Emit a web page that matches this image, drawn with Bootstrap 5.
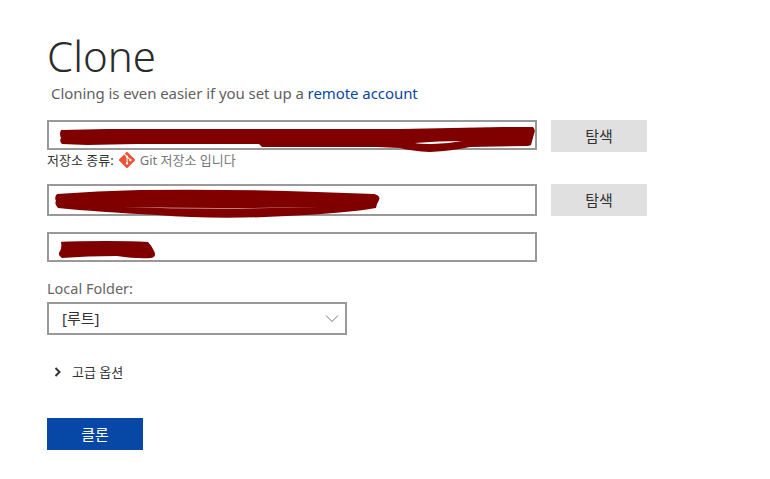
<!DOCTYPE html>
<html lang="ko">
<head>
  <meta charset="UTF-8">
  <meta name="viewport" content="width=device-width, initial-scale=1.0">
  <title>Clone</title>
  <link href="https://cdn.jsdelivr.net/npm/bootstrap@5.3.1/dist/css/bootstrap.min.css" rel="stylesheet">
  <style>
    body {
      font-family: "Noto Sans", "Noto Sans CJK KR", sans-serif;
      background-color: #fff;
      color: #333;
    }
    .clone-page {
      padding: 32px 0 0 47px;
    }
    .clone-title {
      font-size: 42px;
      font-weight: 300;
      line-height: 48px;
      color: #2b2b2b;
      margin: 0;
    }
    .clone-hint {
      font-size: 15px;
      line-height: 20px;
      letter-spacing: -0.07px;
      color: #5f5f5f;
      margin: 3px 0 17px 4px;
    }
    .clone-hint a {
      color: #0b47a1;
      text-decoration: none;
    }
    .field-row {
      gap: 14px;
    }
    .field-wrap {
      width: 490px;
    }
    .field-wrap .form-control,
    .folder-select {
      border: 2px solid #999;
      border-radius: 0;
      box-shadow: none;
    }
    .field-h30 .form-control {
      height: 30px;
    }
    .field-h32 .form-control {
      height: 32px;
    }
    .scribble {
      position: absolute;
      left: 0;
      top: 0;
      overflow: visible;
      pointer-events: none;
    }
    .browse-btn {
      width: 96px;
      height: 32px;
      padding: 0;
      border: 0;
      border-radius: 0;
      background-color: #e0e0e0;
      color: #333;
      font-size: 15px;
    }
    .repo-type {
      font-size: 13px;
      line-height: 16px;
      color: #333;
      height: 32px;
      gap: 5px;
    }
    .repo-type-note {
      color: #777;
    }
    .folder-label {
      font-size: 14.5px;
      line-height: 20px;
      color: #666;
      margin: 16px 0 4px;
    }
    .folder-select {
      width: 300px;
      height: 33px;
      padding: 0 30px 0 13px;
      font-size: 15px;
      color: #333;
      background-size: 14px 11px;
      background-position: right 6px center;
      background-image: url("data:image/svg+xml,%3csvg xmlns='http://www.w3.org/2000/svg' viewBox='0 0 14 8'%3e%3cpath fill='none' stroke='%23777' stroke-width='1' d='M1 1l6 6 6-6'/%3e%3c/svg%3e");
    }
    .advanced-toggle {
      font-size: 13px;
      line-height: 16px;
      color: #333;
      margin-top: 29px;
      padding-left: 7px;
      gap: 11px;
    }
    .clone-btn {
      width: 96px;
      height: 32px;
      padding: 0;
      margin-top: 38px;
      border: 0;
      border-radius: 0;
      background-color: #0747a6;
      color: #fff;
      font-size: 15px;
    }
  </style>
</head>
<body>
  <div class="clone-page">
    <h1 class="clone-title">Clone</h1>
    <p class="clone-hint">Cloning is even easier if you set up a <a href="#">remote account</a></p>

    <!-- Source -->
    <div class="d-flex align-items-start field-row">
      <div class="field-wrap field-h30 position-relative">
        <input type="text" class="form-control">
        <svg class="scribble" width="490" height="30" aria-hidden="true">
          <path fill="#800000" d="M14 10 L60 9 L132 9 L215 9 L353 9 L456 7 L486 7 Q489 10 487 14 L484 25 L481 26 L423 27 Q405 31 383 32 Q365 31 353 28 L330 27 L215 27 L212 24 L130 24 L90 24 L40 25 L15 24 Q12 21 14 18 Q12 14 14 10 Z"/>
          <path fill="#fff" d="M368 23 Q392 21 415 21 Q400 24 385 24 Q372 24 368 23 Z"/>
        </svg>
      </div>
      <button type="button" class="btn browse-btn">탐색</button>
    </div>
    <div class="d-flex align-items-start repo-type">
      <span>저장소 종류:</span>
      <svg width="16" height="16" viewBox="0 0 24 24" aria-hidden="true">
        <path fill="#f05033" d="M23.546 10.93L13.067.452c-.604-.603-1.582-.603-2.188 0L8.708 2.627l2.76 2.76c.645-.215 1.379-.07 1.889.441.516.515.658 1.258.438 1.9l2.658 2.66c.645-.223 1.387-.078 1.9.435.721.72.721 1.884 0 2.604-.719.719-1.881.719-2.6 0-.539-.541-.674-1.337-.404-1.996L12.86 8.955v6.525c.176.086.342.203.488.348.713.721.713 1.883 0 2.6-.719.721-1.889.721-2.609 0-.719-.719-.719-1.879 0-2.598.182-.18.387-.316.605-.406V8.835c-.217-.091-.424-.222-.6-.401-.545-.545-.676-1.342-.396-2.009L7.636 3.7.45 10.881c-.6.605-.6 1.584 0 2.189l10.48 10.477c.604.604 1.582.604 2.186 0l10.43-10.43c.605-.603.605-1.582 0-2.187"/>
      </svg>
      <span class="repo-type-note">Git 저장소 입니다</span>
    </div>

    <!-- Destination -->
    <div class="d-flex align-items-start field-row">
      <div class="field-wrap field-h32 position-relative">
        <input type="text" class="form-control">
        <svg class="scribble" width="490" height="32" aria-hidden="true">
          <path fill="#800000" d="M10 10 Q50 7 93 6 Q190 5 270 8 L327 10 Q334 12 332 16 Q330 19 329 24 Q300 29 240 32 Q170 36 110 31 Q50 28 11 24 Q7 20 9 17 Q7 13 10 10 Z"/>
          <path fill="#fff" d="M76 23 Q170 25 273 23 Q170 26 76 23 Z"/>
        </svg>
      </div>
      <button type="button" class="btn browse-btn">탐색</button>
    </div>

    <div class="field-wrap field-h30 position-relative mt-3">
      <input type="text" class="form-control">
      <svg class="scribble" width="490" height="30" aria-hidden="true">
        <path fill="#800000" d="M14 10 Q16 9 60 9 Q85 9 101 10 Q105 14 107 19 Q110 25 104 26 Q90 27 70 24 Q40 24 15 26 Q10 23 13 19 Q15 16 14 10 Z"/>
      </svg>
    </div>

    <!-- Local folder -->
    <div class="folder-label">Local Folder:</div>
    <select class="form-select folder-select">
      <option>[루트]</option>
    </select>

    <div class="d-flex align-items-center advanced-toggle">
      <svg width="7" height="10" viewBox="0 0 7 10" aria-hidden="true">
        <path fill="none" stroke="#333" stroke-width="2" d="M1.5 1l4 4-4 4"/>
      </svg>
      <span>고급 옵션</span>
    </div>

    <button type="button" class="btn d-block clone-btn">클론</button>
  </div>

  <script src="https://cdn.jsdelivr.net/npm/bootstrap@5.3.1/dist/js/bootstrap.bundle.min.js"></script>
</body>
</html>
